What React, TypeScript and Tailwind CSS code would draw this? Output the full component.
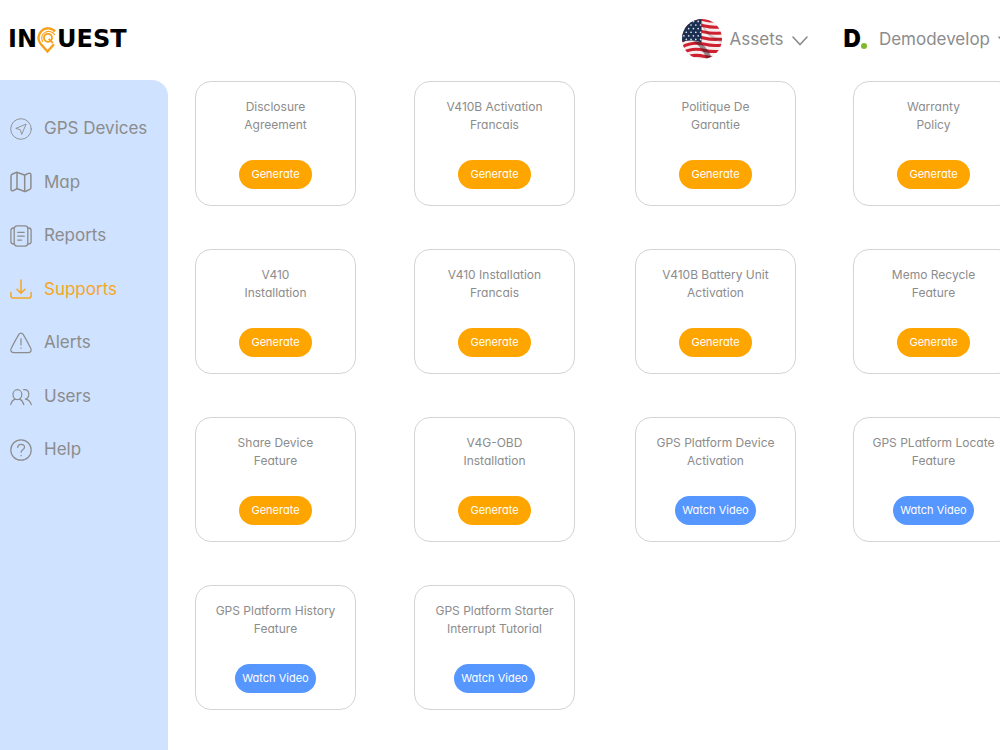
import React from 'react';

type IconProps = { children: React.ReactNode; strokeWidth?: number };

type MenuItem = {
  label: string;
  icon: React.ReactNode;
  active?: boolean;
};

type SupportDoc = {
  id: number;
  title: [string, string];
  video?: boolean;
};

const Icon: React.FC<IconProps> = ({ children, strokeWidth = 1.3 }) => (
  <svg
    viewBox="0 0 22 22"
    className="h-[22px] w-[22px] shrink-0"
    fill="none"
    stroke="currentColor"
    strokeWidth={strokeWidth}
    strokeLinecap="round"
    strokeLinejoin="round"
    aria-hidden="true"
  >
    {children}
  </svg>
);

const menuItems: MenuItem[] = [
  {
    label: 'GPS Devices',
    icon: (
      <Icon strokeWidth={0.9}>
        <circle cx="11" cy="11" r="10.3" />
        <path d="M15.8 6.2 5.8 10.4l4.4 1.3 1.4 4.3z" />
      </Icon>
    ),
  },
  {
    label: 'Map',
    icon: (
      <Icon strokeWidth={1.5}>
        <path d="M2.2 3.2 6 1.5c.6-.3 1-.3 1.600 0l6.200 2.300c.6.2 1 .2 1.600 0l3-1.400c1.300-.6 2.500 0 2.500 1.500v12.700c0 .8-.3 1.400-1.100 1.800l-4 1.900c-.6.300-1.100.300-1.700 0l-6-2.300c-.6-.2-1-.2-1.600 0l-3.200 1.600C2 20.200 1 19.600 1 18.200V5.200c0-.9.4-1.600 1.200-2z" />
        <path d="M7 1.500v16.300M14.700 4v16.300" />
      </Icon>
    ),
  },
  {
    label: 'Reports',
    icon: (
      <Icon>
        <rect x="4.2" y=".9" width="13.6" height="20.2" rx="2.8" />
        <path d="M4.2 3H3.3C1.8 3 .9 4 .9 5.400v11.200C.9 18 1.800 19 3.300 19h.9M17.800 3h.9c1.500 0 2.400 1 2.400 2.400v11.200c0 1.400-.9 2.400-2.400 2.400h-.9" />
        <path d="M7.8 7.3h6.4M7.8 11.2h6.4M7.8 15.1h3.8" />
      </Icon>
    ),
  },
  {
    label: 'Supports',
    active: true,
    icon: (
      <Icon strokeWidth={1.5}>
        <path d="M11 2v13M7 11.2l4 4 4-4M.9 14.5v3.2c0 1.500.6 2.300 2.200 2.300h15.800c1.600 0 2.200-.8 2.200-2.300v-3.2" />
      </Icon>
    ),
  },
  {
    label: 'Alerts',
    icon: (
      <Icon strokeWidth={1.2}>
        <path d="M8.7 2.6c1.200-2 3.400-2 4.600 0 2.300 3.800 5 8.800 7.400 13.600 1.200 2.500 0 4.400-2.700 4.400H4c-2.700 0-3.900-1.900-2.700-4.400 2.400-4.800 5.100-9.800 7.400-13.600z" />
        <path d="M11 6.500v6.500M11 15.800v.4" />
      </Icon>
    ),
  },
  {
    label: 'Users',
    icon: (
      <Icon strokeWidth={1.2}>
        <ellipse cx="7.4" cy="8.600" rx="4.400" ry="5" />
        <path d="M.7 18.600c.8-2.800 2.300-4.700 4.500-5.500M9.600 13.100c2 .8 3.300 2.500 4.200 5.500M13.600 3.700c3-.7 5.200 1.200 5.200 4.500 0 2.500-1.200 4.300-3.500 5 3 .3 5 2.200 6 5.400" />
      </Icon>
    ),
  },
  {
    label: 'Help',
    icon: (
      <Icon strokeWidth={1.2}>
        <circle cx="11" cy="11" r="10.2" />
        <path d="M7.7 8.500c.1-2 1.500-3.200 3.400-3.200s3.400 1.200 3.400 3c0 2.500-3.400 2.400-3.400 5M11.100 16.300v.4" />
      </Icon>
    ),
  },
];

const docs: SupportDoc[] = [
  { id: 1, title: ['Disclosure', 'Agreement'] },
  { id: 2, title: ['V410B Activation', 'Francais'] },
  { id: 3, title: ['Politique De', 'Garantie'] },
  { id: 4, title: ['Warranty', 'Policy'] },
  { id: 5, title: ['V410', 'Installation'] },
  { id: 6, title: ['V410 Installation', 'Francais'] },
  { id: 7, title: ['V410B Battery Unit', 'Activation'] },
  { id: 8, title: ['Memo Recycle', 'Feature'] },
  { id: 9, title: ['Share Device', 'Feature'] },
  { id: 10, title: ['V4G-OBD', 'Installation'] },
  { id: 11, title: ['GPS Platform Device', 'Activation'], video: true },
  { id: 12, title: ['GPS PLatform Locate', 'Feature'], video: true },
  { id: 13, title: ['GPS Platform History', 'Feature'], video: true },
  { id: 14, title: ['GPS Platform Starter', 'Interrupt Tutorial'], video: true },
];

const Logo = () => (
  <a href="#" className="flex items-center font-['DejaVu_Sans',sans-serif] text-2xl leading-none font-bold text-black">
    <span>IN</span>
    {/* Map pin with a round target inside */}
    <svg viewBox="0 0 20 27" className="mt-1 h-[27px] w-5 shrink-0" fill="none" stroke="#f7a11b" aria-label="Q">
      <path strokeWidth="2.4" d="M18 4.500C14.500.6 8.500.2 4.600 3.800.8 7.400.4 13 3.600 16.800L10.500 24.500l6.500-7.200" />
      <path strokeWidth="1.2" d="M17.800 8C16 4.800 11.800 3.400 8.400 5.200 4.800 7 3.600 11.400 5.800 14.800" />
      <circle cx="11" cy="10.800" r="4" strokeWidth="1.800" />
      <path strokeWidth="2" d="M11.800 11.800l4 4.400" />
    </svg>
    <span>UEST</span>
  </a>
);

// Stripes are drawn with a slight wave, the canton sits on top
const Flag = () => (
  <svg viewBox="0 0 42 42" className="h-10 w-10 shrink-0 rounded-full" aria-label="United States">
    <rect width="42" height="42" fill="#f6eeee" />
    <g fill="none" stroke="#cf2030" strokeWidth="3.2">
      {Array.from({ length: 7 }, (_, i) => (
        <path key={i} d={`M0 ${i * 6.4 + 4}C8 ${i * 6.4 - 1} 16 ${i * 6.4 - 1} 24 ${i * 6.4 + 1}S36 ${i * 6.4 + 2} 42 ${i * 6.4 + 2}`} />
      ))}
    </g>
    <path d="M0 0h20.500v25c-6-3-13-3-20.500-1z" fill="#1b2f50" />
    <g fill="#dfe5ee">
      {Array.from({ length: 24 }, (_, i) => (
        <circle key={i} cx={(i % 4) * 5 + (Math.floor(i / 4) % 2) * 2.5 + 2} cy={Math.floor(i / 4) * 3.8 + 2.5} r="0.9" />
      ))}
    </g>
    <path d="M15 23c7 2 12 8 17 19h-6C22 33 18 28 12 24z" fill="#3a1820" opacity=".5" />
    <path d="M21 2c3 10 9 15 21 20v3C30 21 23 14 21 6z" fill="#55202a" opacity=".2" />
  </svg>
);

const Chevron = () => (
  <svg viewBox="0 0 16 10" className="mt-1 h-[10px] w-4 shrink-0" fill="none" stroke="#8c8c8c" strokeWidth="1.6" strokeLinecap="round" aria-hidden="true">
    <path d="M1 1l7 7.500L15 1" />
  </svg>
);

const SupportCard: React.FC<{ doc: SupportDoc }> = ({ doc }) => (
  <article className="flex h-[125px] w-[161px] flex-col items-center rounded-2xl border border-[#d4d4d4] pt-4">
    <h2 className="text-center text-xs leading-[18px] whitespace-nowrap text-[#8c8c8c]">
      {doc.title[0]}
      <br />
      {doc.title[1]}
    </h2>
    {doc.video ? (
      <button type="button" className="mt-[26px] h-[29px] w-[81px] rounded-full bg-[#5596ff] text-[11px] text-white">
        Watch Video
      </button>
    ) : (
      <button type="button" className="mt-[26px] h-[29px] w-[73px] rounded-full bg-[#ffa500] text-[11px] text-white">
        Generate
      </button>
    )}
  </article>
);

const App: React.FC = () => {
  return (
    <div className="flex min-h-screen flex-col overflow-hidden bg-white font-['Inter',sans-serif] text-[#8c8c8c] [font-feature-settings:'cv11']">
      <header className="flex h-20 shrink-0 items-center justify-between pb-[3px] pl-2">
        <Logo />
        <div className="-mr-[14px] flex items-center gap-9">
          <button type="button" className="flex items-center gap-2 text-[17px]">
            <Flag />
            <span className="leading-6">Assets</span>
            <Chevron />
          </button>
          <button type="button" className="flex items-center gap-2 text-[17px]">
            <span className="mr-1 flex items-end" aria-hidden="true">
              <span className="text-2xl leading-6 font-black text-black">D</span>
              <span className="mb-[2px] h-[6px] w-[6px] rounded-full bg-[#80b82c]" />
            </span>
            <span className="leading-6">Demodevelop</span>
            <Chevron />
          </button>
        </div>
      </header>

      <div className="flex flex-1">
        <nav className="w-[168px] shrink-0 rounded-tr-2xl bg-[#cfe2ff] pt-[22px]">
          <ul className="grid h-[375px] auto-rows-fr">
            {menuItems.map((item) => (
              <li key={item.label} className="flex">
                <a href="#" className={`flex flex-1 items-center gap-3 pl-[10px] text-[17px] ${item.active ? 'text-[#f5a623]' : 'text-[#8c8c8c]'}`}>
                  {item.icon}
                  <span>{item.label}</span>
                </a>
              </li>
            ))}
          </ul>
        </nav>

        <main className="min-w-0 flex-1 overflow-hidden pt-px pb-10 pl-[27px]">
          <div className="grid grid-cols-[219px_221px_218px_161px] gap-y-[43px]">
            {docs.map((doc) => (
              <SupportCard key={doc.id} doc={doc} />
            ))}
          </div>
        </main>
      </div>
    </div>
  );
};

export default App;
